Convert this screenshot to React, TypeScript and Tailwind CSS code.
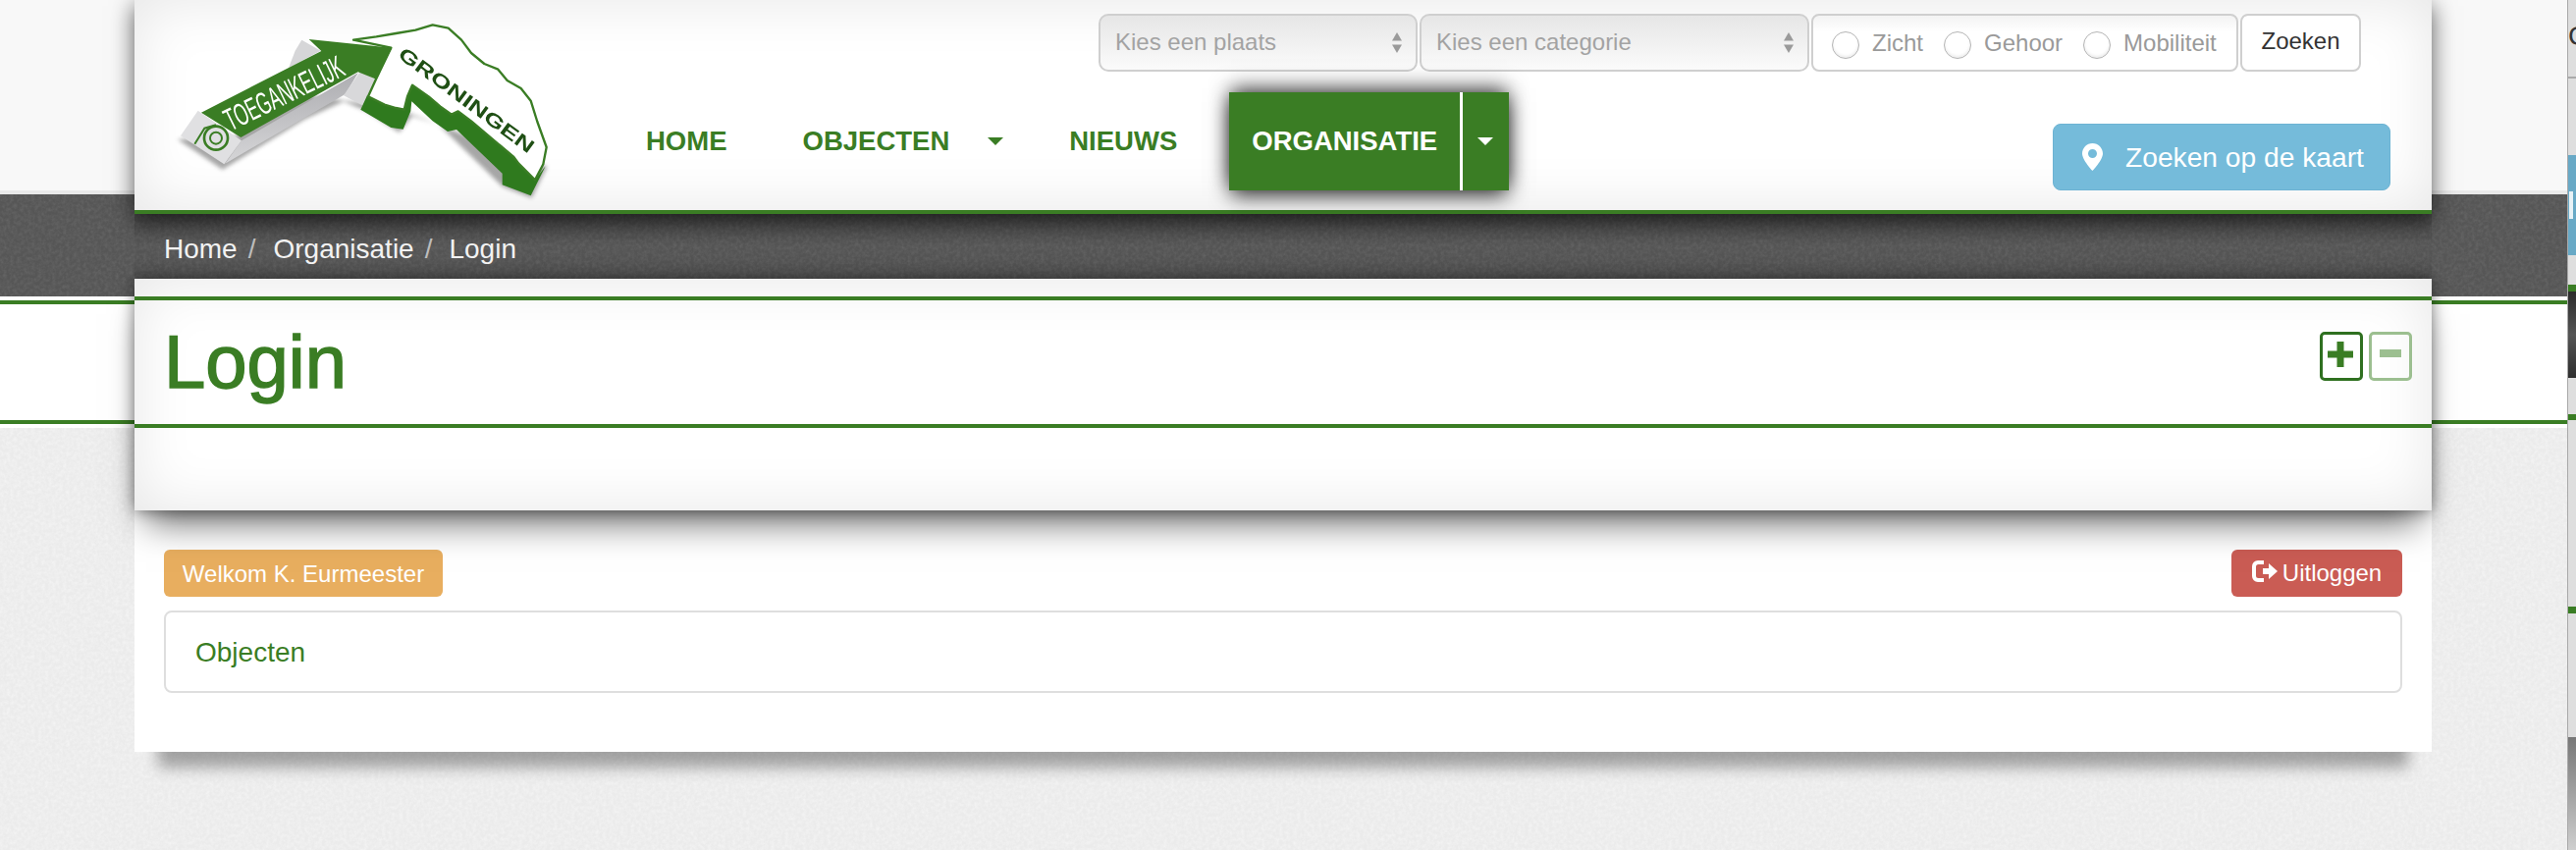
const font = "[font-family:'Liberation_Sans',Arial,sans-serif]";

function Noise({ id, opacity }: { id: string; opacity: string }) {
  return (
    <svg className={`absolute inset-0 w-full h-full ${opacity}`} aria-hidden="true">
      <filter id={id}>
        <feTurbulence type="fractalNoise" baseFrequency="0.28" numOctaves="3" seed="4" />
        <feColorMatrix values="0 0 0 0 1  0 0 0 0 1  0 0 0 0 1  1.4 0 0 0 -0.45" />
      </filter>
      <rect width="100%" height="100%" filter={`url(#${id})`} />
    </svg>
  );
}

function Logo() {
  return (
    <svg viewBox="0 0 1200 600" className="w-[400px] h-[200px] shrink-0 mt-[10px] blur-[0.6px]">
      <defs>
        <filter id="logo-shadow" x="-10%" y="-10%" width="120%" height="120%">
          <feGaussianBlur stdDeviation="7" />
        </filter>
        <linearGradient id="shaft-side" x1="0" y1="0" x2="0.12" y2="1">
          <stop offset="0" stopColor="#a8a8ac" />
          <stop offset="1" stopColor="#d6d6d8" />
        </linearGradient>
      </defs>
      <g filter="url(#logo-shadow)" fill="#808080" opacity="0.7">
        <polygon points="32,395 170,488 420,335 540,280 610,310 710,375 750,325 830,350 1025,540 1115,575 1162,480 700,300 430,260 200,390" />
      </g>
      <polygon points="228,400 585,192 545,258 178,470" fill="url(#shaft-side)" />
      <polygon points="412,92 470,125 372,178 392,125" fill="#d6d6d8" />
      <polygon points="42,385 95,308 228,400 175,472" fill="#e0e0e2" />
      <polygon points="540,262 590,190 642,214 606,296" fill="#d8d8da" />
      <polygon
        points="612,262 592,305 685,360 722,365 745,310 748,280 812,340 858,372 885,366 1025,500 1025,535 1112,568 1157,478 1125,520 1075,470 1060,450 930,340 890,310 870,320 835,295 800,265 750,230 735,265 725,305 700,300 665,290"
        fill="#2f7a1e"
      />
      <path
        d="M570,92 L640,82 L700,72 L760,62 L812,46 L860,56 L900,92 L930,132 L970,165 L1012,182 L1040,216 L1082,240 L1112,278 L1132,342 L1160,420 L1150,472 L1125,520 L1075,470 L1060,450 L930,340 L890,310 L870,320 L835,295 L800,265 L750,230 L735,265 L725,305 L700,300 L665,290 L615,265 L640,210 L685,116 Z"
        fill="#ffffff"
        stroke="#3a7d24"
        strokeWidth="7"
        strokeLinejoin="round"
      />
      <polygon points="105,314 472,126 434,90 688,116 640,212 584,190 226,390" fill="#3a7d24" />
      <circle cx="150" cy="392" r="36" fill="none" stroke="#3a7d24" strokeWidth="8" />
      <circle cx="150" cy="392" r="18" fill="none" stroke="#3a7d24" strokeWidth="6" />
      <path d="M85,410 L115,362 L150,352" fill="none" stroke="#3a7d24" strokeWidth="6" />
      <text
        transform="translate(195,371) rotate(-26)"
        fill="#ffffff"
        fontFamily="'Liberation Sans', Arial, sans-serif"
        fontSize="96"
        textLength="395"
        lengthAdjust="spacingAndGlyphs"
      >
        TOEGANKELIJK
      </text>
      <text
        transform="translate(703,143) rotate(36.5)"
        fill="#1f4f14"
        fontFamily="'Liberation Sans', Arial, sans-serif"
        fontWeight="700"
        fontSize="58"
        textLength="500"
        lengthAdjust="spacingAndGlyphs"
      >
        GRONINGEN
      </text>
    </svg>
  );
}

function Caret({ white }: { white?: boolean }) {
  return (
    <svg viewBox="0 0 16 8" className="w-4 h-2 shrink-0">
      <polygon points="0,0 16,0 8,8" fill={white ? "#ffffff" : "#3a7d24"} />
    </svg>
  );
}

function SelectBox({ label, width }: { label: string; width: string }) {
  return (
    <div className={`${width} h-full flex items-center justify-between pl-[15px] pr-[14px] rounded-[10px] border-2 border-[#cfcfcf] bg-linear-to-b from-[#e6e6e6] to-[#fbfbfb] text-[24px] text-[#a3a3a3]`}>
      <span className="pb-[2px]">{label}</span>
      <svg viewBox="0 0 10 21" className="w-[10px] h-[21px]">
        <polygon points="5,0 10,8.5 0,8.5" fill="#9a9a9a" />
        <polygon points="0,12.5 10,12.5 5,21" fill="#9a9a9a" />
      </svg>
    </div>
  );
}

function Radio({ label }: { label: string }) {
  return (
    <label className="flex items-center gap-[13px] pt-[5px]">
      <span className="w-[28px] h-[28px] rounded-full border border-[#b4b4b4] bg-white shadow-[inset_0_-2px_3px_rgba(0,0,0,0.08)]" />
      <span className="pb-[4px]">{label}</span>
    </label>
  );
}

function RightStrip() {
  return (
    <div className="absolute top-0 bottom-0 right-0 w-[8px] z-30 flex flex-col overflow-hidden bg-[#dedede] shadow-[-1px_0_0_#a9a9a9]">
      <div className="h-[78px] text-[28px] leading-[74px] text-[#333] pl-0">C</div>
      <div className="h-[2px] bg-[#aaaaaa]" />
      <div className="h-[78px]" />
      <div className="h-[102px] bg-[#68a9c6] pt-[37px]">
        <div className="w-[4px] h-[28px] ml-[1px] bg-[#e8f2f6]" />
      </div>
      <div className="h-[30px]" />
      <div className="h-[7px] bg-[#3a7d24]" />
      <div className="h-[88px] bg-linear-to-b from-[#2c2c2c] via-[#555555] to-[#2e2e2e]" />
      <div className="h-[37px]" />
      <div className="h-[6px] bg-[#3a7d24]" />
      <div className="h-[190px]" />
      <div className="h-[7px] bg-[#3a7d24]" />
      <div className="h-[126px]" />
      <div className="flex-1 bg-linear-to-b from-[#777777] to-[#cfcfcf]" />
    </div>
  );
}

export default function App() {
  return (
    <div className={`relative w-[2624px] h-[866px] overflow-hidden bg-[#ebebeb] ${font}`}>
      {/* full width bands behind the page column */}
      <div className="absolute inset-0 flex flex-col">
        <div className="h-[198px] bg-[#f8f8f8] border-b-4 border-[#e9e9e9]" />
        <div className="relative h-[104px] bg-[#565656] overflow-hidden">
          <Noise id="noise-dark" opacity="opacity-10" />
        </div>
        <div className="h-[134px] bg-white border-t-4 border-b-4 border-white">
          <div className="h-full border-y-4 border-[#3a7d24]" />
        </div>
        <div className="relative flex-1 overflow-hidden">
          <Noise id="noise-light" opacity="opacity-50" />
        </div>
      </div>

      <div className="relative ml-[137px] w-[2340px] h-[766px] flex flex-col">
        <header className="relative z-10 h-[218px] shrink-0 flex pl-[33px] bg-white border-b-4 border-[#3a7d24] shadow-[inset_0_0_60px_rgba(0,0,0,0.1),0_6px_22px_rgba(0,0,0,0.65)]">
          <Logo />
          <div className="flex-1 flex flex-col pt-[14px]">
            <div className="flex ml-[549px] gap-[2px] h-[59px]">
              <SelectBox label="Kies een plaats" width="w-[325px]" />
              <SelectBox label="Kies een categorie" width="w-[397px]" />
              <div className="w-[435px] h-full flex items-center gap-[21px] pl-[19px] rounded-[8px] border-2 border-[#cfcfcf] bg-linear-to-b from-[#f3f3f3] to-white to-30% text-[24px] text-[#9a9a9a]">
                <Radio label="Zicht" />
                <Radio label="Gehoor" />
                <Radio label="Mobiliteit" />
              </div>
              <button className="w-[123px] h-full pb-[3px] rounded-[8px] border-2 border-[#cfcfcf] bg-white text-[24px] text-[#333]">
                Zoeken
              </button>
            </div>
            <div className="flex items-start mt-[21px] pr-[42px]">
              <nav className="flex items-center h-[100px] pl-[88px] text-[27.5px] font-bold text-[#3a7d24]">
                <a>HOME</a>
                <a className="ml-[77px]">OBJECTEN</a>
                <span className="ml-[39px]"><Caret /></span>
                <a className="ml-[67px]">NIEUWS</a>
                <div className="ml-[53px] w-[285px] h-[100px] flex items-center bg-[#3a7d24] text-white shadow-[0_-6px_20px_-2px_rgba(0,0,0,0.7),0_8px_20px_-2px_rgba(0,0,0,0.7)]">
                  <a className="w-[238px] h-full flex items-center pl-[23px] border-r-[3px] border-white">ORGANISATIE</a>
                  <span className="ml-[15px]"><Caret white /></span>
                </div>
              </nav>
              <button className="ml-auto mt-[32px] w-[344px] h-[68px] flex items-center pl-[29px] rounded-[8px] border border-[#6db3d3] bg-[#75bbda] text-[28.2px] text-white">
                <svg viewBox="0 0 21 28" className="w-[21px] h-[28px]">
                  <path
                    fillRule="evenodd"
                    fill="#ffffff"
                    d="M10.5 0C4.7 0 0 4.7 0 10.5 0 17 10.5 28 10.5 28S21 17 21 10.5C21 4.7 16.3 0 10.5 0zM10.5 6a4.5 4.5 0 1 1 0 9 4.5 4.5 0 0 1 0-9z"
                  />
                </svg>
                <span className="ml-[23px]">Zoeken op de kaart</span>
              </button>
            </div>
          </div>
        </header>

        <div className="relative z-20 h-[66px] shrink-0 flex items-center pl-[30px] pt-[6px] bg-linear-to-b from-black/20 via-transparent to-black/10 text-[28px] text-[#f2f2f2]">
          <a>Home</a>
          <span className="ml-[11px] text-[#bdbdbd]">/</span>
          <a className="ml-[18px]">Organisatie</a>
          <span className="ml-[11px] text-[#bdbdbd]">/</span>
          <a className="ml-[17px]">Login</a>
        </div>

        <section className="relative z-10 h-[236px] shrink-0 pt-[18px] bg-white shadow-[inset_0_0_60px_rgba(0,0,0,0.1),0_0_14px_rgba(0,0,0,0.45),0_24px_34px_-12px_rgba(0,0,0,0.6)]">
          <div className="h-[134px] flex justify-between pl-[30px] pr-[20px] border-y-4 border-[#3a7d24]">
            <h1 className="text-[76px] leading-[126px] text-[#3a7d24] [-webkit-text-stroke:1.5px_#3a7d24]">Login</h1>
            <div className="flex gap-[6px] mt-[32px] h-[50px]">
              <button className="w-[44px] h-[50px] flex items-center justify-center rounded-[5px] border-[3px] border-[#2f7020]">
                <svg viewBox="0 0 26 26" className="w-[26px] h-[26px] mb-[4px] mr-[2px]">
                  <path d="M9.5 0h7v9.5H26v7h-9.5V26h-7v-9.5H0v-7h9.5z" fill="#3a7d24" />
                </svg>
              </button>
              <button className="w-[44px] h-[50px] flex items-center justify-center rounded-[5px] border-[3px] border-[#9cbf90]">
                <svg viewBox="0 0 22 8" className="w-[22px] h-[8px] mb-[6px]">
                  <rect width="22" height="8" fill="#9cbf90" />
                </svg>
              </button>
            </div>
          </div>
        </section>

        <main className="flex-1 px-[30px] pt-[40px] bg-white shadow-[0_40px_14px_-24px_rgba(0,0,0,0.32)]">
          <div className="flex justify-between h-[48px] text-[24px] text-white">
            <span className="w-[284px] flex items-center justify-center pt-[1px] rounded-[6px] bg-[#e8ae5f]">Welkom K. Eurmeester</span>
            <button className="w-[174px] flex items-center justify-center gap-[5px] rounded-[6px] bg-[#ca5c54]">
              <svg viewBox="0 0 26 22" className="w-[26px] h-[22px] mb-[4px]">
                <path
                  fill="#ffffff"
                  d="M12 0H6a6 6 0 0 0-6 6v10a6 6 0 0 0 6 6h6v-4H6.5A2.5 2.5 0 0 1 4 15.5v-9A2.5 2.5 0 0 1 6.5 4H12zM11 8h6V3l9 8-9 8v-5h-6z"
                />
              </svg>
              <span>Uitloggen</span>
            </button>
          </div>
          <div className="mt-[14px] h-[84px] flex items-center pl-[30px] pt-[2px] rounded-[8px] border-2 border-[#dedede] bg-white text-[28px] text-[#3a7d24]">
            Objecten
          </div>
        </main>
      </div>

      <RightStrip />
    </div>
  );
}
